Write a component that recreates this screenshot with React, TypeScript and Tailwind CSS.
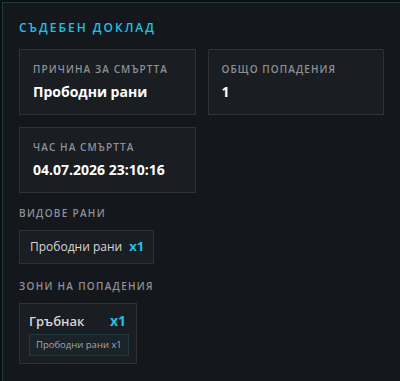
export default function App() {
  return (
    <div className="w-[400px] h-[381px] overflow-hidden bg-[#0d1013] pl-[2px] pt-[2px]" style={{ fontFamily: '"Open Sans", "Noto Sans", sans-serif' }}>
      <div className="w-[420px] h-[400px] border-l border-t border-[#1d3a40] bg-[#14171b] px-[16px] pt-[17px]">
        <h2 className="text-[12px] font-semibold tracking-[2px] text-[#1fc1e3] leading-[16px]">СЪДЕБЕН ДОКЛАД</h2>

        <div className="mt-[13px] grid grid-cols-2 gap-3 w-[365px]">
          <StatCard label="ПРИЧИНА ЗА СМЪРТТА" value="Прободни рани" />
          <StatCard label="ОБЩО ПОПАДЕНИЯ" value="1" />
          <StatCard label="ЧАС НА СМЪРТТА" value="04.07.2026 23:10:16" />
        </div>

        <SectionLabel className="mt-[13px]">ВИДОВЕ РАНИ</SectionLabel>
        <div className="mt-[10px] flex">
          <div className="flex items-center gap-[7px] h-[34px] pl-[10px] pr-[9px] border border-[#2e3236] bg-[#1a1d21]">
            <span className="text-[12px] text-[#d4d6d8]">Прободни рани</span>
            <span className="text-[13px] font-bold text-[#1fc1e3]">x1</span>
          </div>
        </div>

        <SectionLabel className="mt-[15px]">ЗОНИ НА ПОПАДЕНИЯ</SectionLabel>
        <div className="mt-[10px] flex">
          <div className="w-[118px] border border-[#2e3236] bg-[#1a1d21] pl-[9px] pr-[10px] pt-[8px] pb-[7px]">
            <div className="flex items-center justify-between">
              <span className="text-[13px] leading-[18px] font-semibold text-[#d4d6d8]">Гръбнак</span>
              <span className="text-[14px] leading-[18px] font-bold text-[#1fc1e3]">x1</span>
            </div>
            <div className="mt-[4px] w-fit whitespace-nowrap border border-[#1e3b42] bg-[#192328] px-[6px] py-[3px] text-[9.5px] leading-[14px] text-[#a4a8ac]">
              Прободни рани x1
            </div>
          </div>
        </div>
      </div>
    </div>
  )
}

function StatCard({ label, value }: { label: string; value: string }) {
  return (
    <div className="h-[66px] border border-[#2e3236] bg-[#1a1d21] px-[13px] pt-[12px]">
      <p className="text-[10px] font-semibold tracking-[1.1px] text-[#8d9195] leading-[14px]">{label}</p>
      <p className="mt-[6px] text-[14px] font-bold text-white leading-[20px]">{value}</p>
    </div>
  )
}

function SectionLabel({ children, className }: { children: React.ReactNode; className?: string }) {
  return (
    <p className={`text-[10px] font-semibold tracking-[1.3px] text-[#8d9195] leading-[14px] ${className ?? ""}`}>{children}</p>
  )
}
